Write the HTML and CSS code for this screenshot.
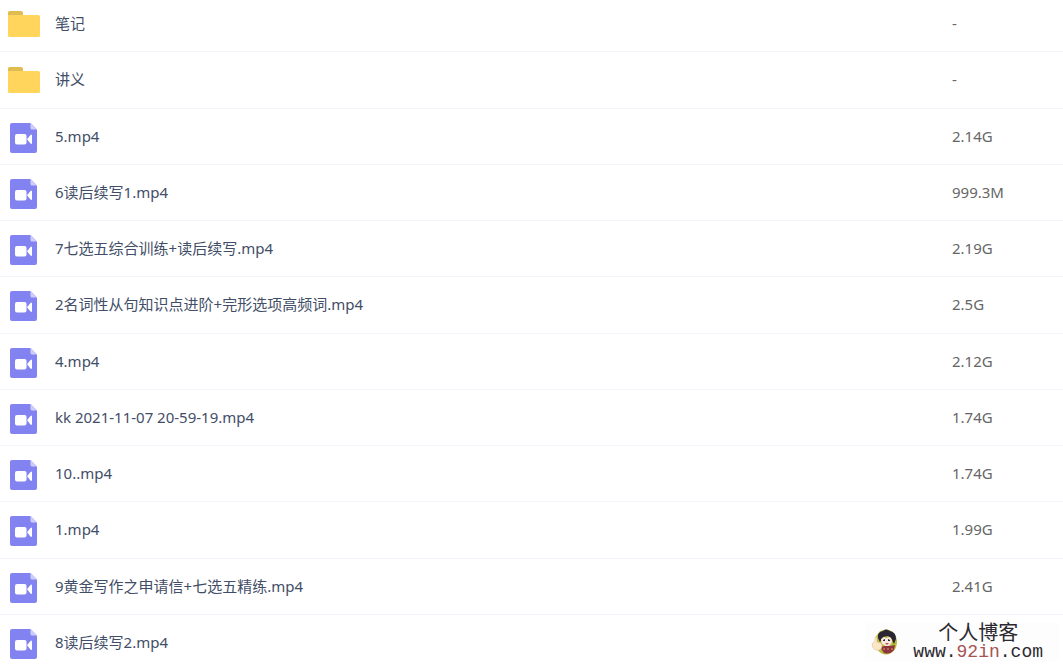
FILE: index.html
```html
<!DOCTYPE html>
<html lang="zh-CN">
<head>
<meta charset="utf-8">
<title>文件列表</title>
<link rel="stylesheet" href="styles.css">
</head>
<body>
<svg class="symbols" aria-hidden="true">
  <symbol id="folder" viewBox="0 0 32 26">
    <path fill="#e0bb4d" d="M0 6V1.500Q0 0 1.500 0H13Q14.500 0 15 1.500V6Z"/>
    <path fill="#ffd55c" d="M0 4H30.500Q32 4 32 5.500V24.500Q32 26 30.500 26H1.500Q0 26 0 24.500Z"/>
    <path stroke="#d9c063" stroke-dasharray="1 1" d="M1 3.500H15"/>
  </symbol>
  <symbol id="video" viewBox="0 0 27 30">
    <path fill="#8283f0" d="M2 0H20.500L27 6.500V28Q27 30 25 30H2Q0 30 0 28V2Q0 0 2 0Z"/>
    <path fill="#cdcdfa" d="M20.500 0L27 6.500H22Q20.500 6.500 20.500 5Z"/>
    <rect fill="#fff" x="5" y="11" width="11.500" height="10.500" rx="2"/>
    <path fill="#fff" d="M17 16.200L20.500 12Q22 11 22 12.500V20Q22 21.500 20.500 20.500Z"/>
  </symbol>
</svg>
<main>
  <table class="files">
    <tbody>
      <tr><td class="name"><div class="file"><span class="icon"><svg class="folder"><use href="#folder"/></svg></span>笔记</div></td><td class="size">-</td></tr>
      <tr><td class="name"><div class="file"><span class="icon"><svg class="folder"><use href="#folder"/></svg></span>讲义</div></td><td class="size">-</td></tr>
      <tr><td class="name"><div class="file"><span class="icon"><svg class="video"><use href="#video"/></svg></span>5.mp4</div></td><td class="size">2.14G</td></tr>
      <tr><td class="name"><div class="file"><span class="icon"><svg class="video"><use href="#video"/></svg></span>6读后续写1.mp4</div></td><td class="size">999.3M</td></tr>
      <tr><td class="name"><div class="file"><span class="icon"><svg class="video"><use href="#video"/></svg></span>7七选五综合训练+读后续写.mp4</div></td><td class="size">2.19G</td></tr>
      <tr><td class="name"><div class="file"><span class="icon"><svg class="video"><use href="#video"/></svg></span>2名词性从句知识点进阶+完形选项高频词.mp4</div></td><td class="size">2.5G</td></tr>
      <tr><td class="name"><div class="file"><span class="icon"><svg class="video"><use href="#video"/></svg></span>4.mp4</div></td><td class="size">2.12G</td></tr>
      <tr><td class="name"><div class="file"><span class="icon"><svg class="video"><use href="#video"/></svg></span>kk 2021-11-07 20-59-19.mp4</div></td><td class="size">1.74G</td></tr>
      <tr><td class="name"><div class="file"><span class="icon"><svg class="video"><use href="#video"/></svg></span>10..mp4</div></td><td class="size">1.74G</td></tr>
      <tr><td class="name"><div class="file"><span class="icon"><svg class="video"><use href="#video"/></svg></span>1.mp4</div></td><td class="size">1.99G</td></tr>
      <tr><td class="name"><div class="file"><span class="icon"><svg class="video"><use href="#video"/></svg></span>9黄金写作之申请信+七选五精练.mp4</div></td><td class="size">2.41G</td></tr>
      <tr><td class="name"><div class="file"><span class="icon"><svg class="video"><use href="#video"/></svg></span>8读后续写2.mp4</div></td><td class="size"></td></tr>
    </tbody>
  </table>
</main>
<aside class="watermark">
  <svg class="avatar" viewBox="0 0 28 28" aria-hidden="true">
    <ellipse cx="15" cy="14" rx="11" ry="12.500" fill="#b9bd3e"/>
    <path fill="#2b2633" d="M7 10Q6 4 12 3Q15 0 19 3Q25 4 25 11L23 16L20 10L17 8L12 9L9 14Z"/>
    <path fill="#f8e9df" d="M10 11L13 9L15 10L19 9L21 12Q21 18 15.500 18Q10 17 10 11Z"/>
    <path fill="#2b2633" d="M12 12L14 11V13H12ZM17 11L19 12V13H17Z"/>
    <path fill="#c44e50" d="M14 15H18L16 17Z"/>
    <path fill="#8c3440" d="M9 19L14 18H19L24 17L23 22Q19 27 13 25Z"/>
    <path stroke="#e1a15b" stroke-width="1" stroke-dasharray="2 2" d="M12 21H22"/>
    <path fill="#fbe6c6" stroke="#dfb795" stroke-width=".5" d="M4 9Q6 8 6 11V14L10 15Q12 18 10 21Q6 24 2 20L1 16L4 13Z"/>
  </svg>
  <div class="brand">
    <span class="brand-name">个人博客</span>
    <span class="brand-url">www.<span class="accent">92in</span>.com</span>
  </div>
</aside>
</body>
</html>
```
FILE: styles.css
```css
body {
  position: relative;
  height: 100vh;
  margin: 0;
  overflow: hidden;
  background: #fff;
  color: #424e67;
  font: 15px/20px "Noto Sans", "Noto Sans CJK SC", sans-serif;
}

.symbols {
  position: absolute;
  width: 0;
  height: 0;
}

.files {
  width: 100%;
  margin-top: -4px;
  border-collapse: separate;
  border-spacing: 0;
  table-layout: fixed;
}

.files td {
  box-sizing: border-box;
  height: 56px;
  padding: 0 0 2px;
  border-bottom: 1px solid #f1f5fa;
  vertical-align: middle;
}

.files tr:nth-child(4n + 2) td {
  height: 57px;
}

.files .size {
  width: 111px;
  color: #666;
}

.file {
  display: flex;
  align-items: center;
  gap: 15px;
  padding-left: 8px;
}

.icon {
  display: flex;
  flex: none;
  width: 32px;
  padding-top: 4px;
}

.folder {
  width: 32px;
  height: 26px;
  margin-bottom: 2px;
}

.video {
  width: 27px;
  height: 30px;
  margin-left: 2px;
}

.watermark {
  position: absolute;
  right: 4px;
  bottom: 3px;
  display: flex;
  align-items: center;
  gap: 14px;
  padding: 0 16px 0 6px;
  background: #fdfdfd;
  color: #2c2930;
}

.avatar {
  width: 28px;
  height: 28px;
}

.brand {
  display: flex;
  flex-direction: column;
  align-items: center;
}

.brand-name {
  font-size: 20px;
  line-height: 20px;
}

.brand-url {
  font: 18px/18px "Liberation Mono", monospace;
}

.accent {
  color: #a65353;
}
```
